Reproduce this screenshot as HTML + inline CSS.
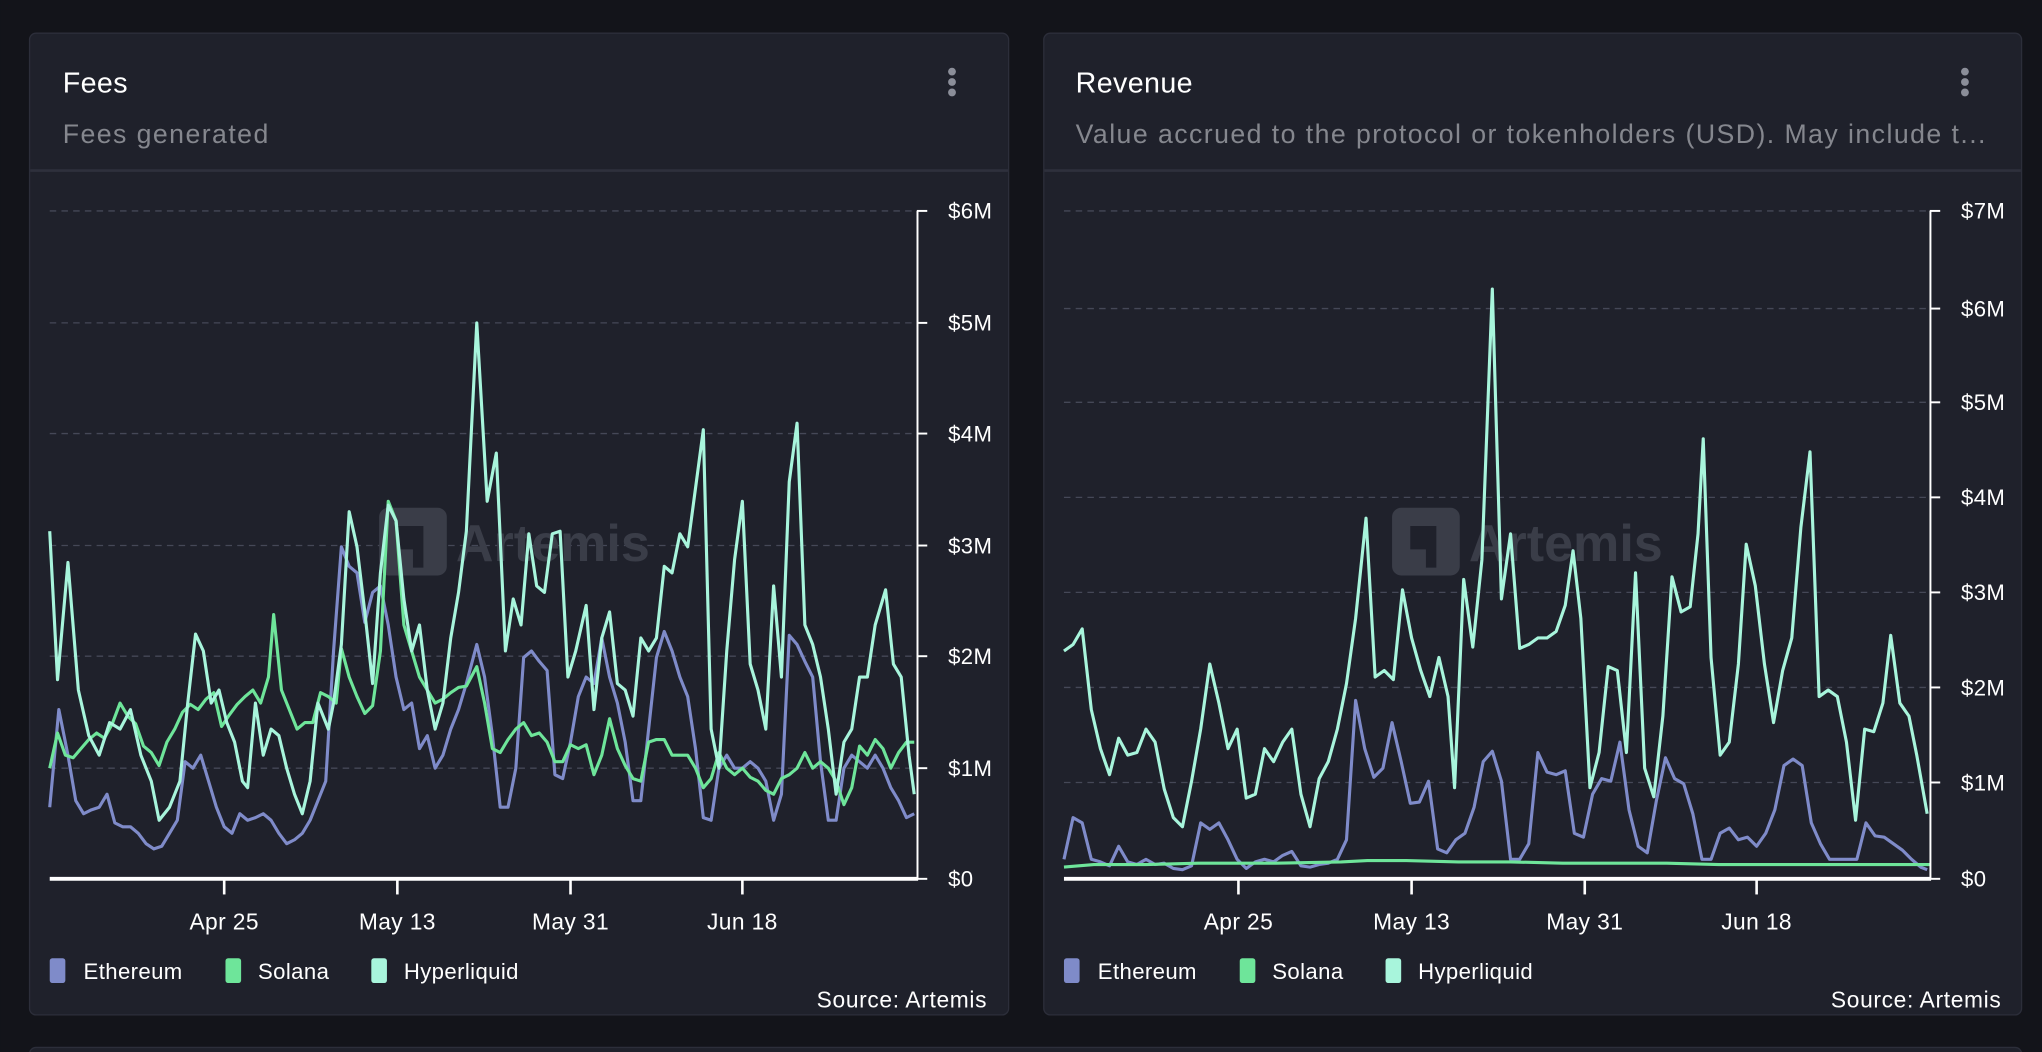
<!DOCTYPE html>
<html><head><meta charset="utf-8"><style>
html,body{margin:0;padding:0;background:#13141a;overflow:hidden}
svg{display:block}
text{font-family:"Liberation Sans",sans-serif}
</style></head><body>
<svg width="2042" height="1052" viewBox="0 0 1568 808" xmlns="http://www.w3.org/2000/svg">
<rect width="1568" height="808" fill="#13141a"/>
<rect x="22.5" y="25.5" width="752" height="754" rx="5" fill="#1f212b" stroke="#2c2e3a"/>
<rect x="801.5" y="25.5" width="751" height="754" rx="5" fill="#1f212b" stroke="#2c2e3a"/>
<rect x="22.5" y="804.5" width="1530" height="30" rx="5" fill="#1f212b" stroke="#2c2e3a"/>
<line x1="23" y1="131" x2="774" y2="131" stroke="#2e303c" stroke-width="2"/>
<line x1="802" y1="131" x2="1552" y2="131" stroke="#2e303c" stroke-width="2"/>
<text x="48" y="71" fill="#fff" font-size="22" letter-spacing="0.3">Fees</text>
<text x="48" y="110" fill="#85878e" font-size="20.5" letter-spacing="1.1">Fees generated</text>
<text x="826" y="71" fill="#fff" font-size="22" letter-spacing="0.3">Revenue</text>
<text x="826" y="110" fill="#85878e" font-size="20.5" letter-spacing="1.1">Value accrued to the protocol or tokenholders (USD). May include t...</text>
<g fill="#8b8e99"><circle cx="731" cy="55" r="3"/><circle cx="731" cy="63" r="3"/><circle cx="731" cy="71" r="3"/>
<circle cx="1509" cy="55" r="3"/><circle cx="1509" cy="63" r="3"/><circle cx="1509" cy="71" r="3"/></g>

<g stroke="#454857" stroke-dasharray="5,4" stroke-width="1">
<line x1="38" y1="162" x2="704" y2="162"/><line x1="38" y1="248" x2="704" y2="248"/><line x1="38" y1="333" x2="704" y2="333"/><line x1="38" y1="419" x2="704" y2="419"/><line x1="38" y1="504" x2="704" y2="504"/><line x1="38" y1="590" x2="704" y2="590"/>
<line x1="817" y1="162" x2="1482" y2="162"/><line x1="817" y1="237" x2="1482" y2="237"/><line x1="817" y1="309" x2="1482" y2="309"/><line x1="817" y1="382" x2="1482" y2="382"/><line x1="817" y1="455" x2="1482" y2="455"/><line x1="817" y1="528" x2="1482" y2="528"/><line x1="817" y1="601" x2="1482" y2="601"/>
</g>
<g fill="#3a3d48">
<rect x="291" y="390" width="52" height="52" rx="7"/>
<text x="350" y="431" font-size="40" font-weight="bold">Artemis</text>
<rect x="1069" y="390" width="52" height="52" rx="7"/>
<text x="1128" y="431" font-size="40" font-weight="bold">Artemis</text>
</g>
<g fill="#1f212b">
<path d="M305 404h20v32h-8v-14h-12z"/><path d="M1083 404h20v32h-8v-14h-12z"/>
</g>

<g fill="none" stroke-width="2.4" stroke-linejoin="round">
<polyline stroke="#7f8bc9" points="38,620 45,545 52,580 58,615 64,625 70,622 76,620 82,610 88,632 94,635 100,635 106,640 112,648 118,652 124,650 130,640 136,630 142,585 148,590 154,580 160,600 166,620 172,635 178,640 184,625 190,630 196,628 202,625 208,630 214,640 220,648 226,645 232,640 238,630 244,615 250,600 256,500 262,420 268,435 274,440 280,478 286,455 292,450 298,480 304,520 310,545 316,540 322,575 328,565 334,590 340,580 346,560 352,545 358,525 366,495 372,520 378,565 384,620 390,620 396,590 402,505 408,500 414,508 420,515 426,595 432,598 438,570 444,535 450,520 456,525 462,490 468,520 474,540 480,570 486,615 492,615 498,560 504,505 510,485 516,500 522,520 528,535 534,575 540,628 546,630 552,590 558,580 564,590 570,590 576,585 582,590 588,600 594,630 600,610 606,488 612,495 618,508 624,520 630,585 636,630 642,630 648,590 654,580 660,585 666,590 672,580 678,590 684,605 690,615 696,628 702,625"/>
<polyline stroke="#6ee59a" points="38,590 44,563 50,580 56,582 62,575 68,568 74,563 80,567 86,556 92,540 98,550 104,556 110,573 116,578 122,588 128,570 134,560 140,547 146,541 152,545 158,537 164,532 170,558 176,549 182,541 188,535 194,530 200,540 206,520 210,472 216,530 222,545 228,560 234,555 240,555 246,532 252,535 258,540 262,498 268,520 274,535 280,548 286,542 292,500 298,385 304,400 310,480 316,500 322,520 328,530 334,540 340,537 346,532 352,528 358,527 366,512 372,540 378,575 384,578 390,568 396,560 402,555 408,565 414,563 420,570 426,585 432,585 438,572 444,575 450,572 456,595 462,580 468,552 474,575 480,588 486,598 492,600 498,570 504,568 510,568 516,580 522,580 528,580 534,590 540,605 546,598 552,578 558,590 564,595 570,590 576,597 582,600 588,607 594,610 600,598 606,595 612,590 618,578 624,590 630,585 636,590 642,600 648,618 654,605 660,573 666,580 672,568 678,575 684,590 690,578 696,570 702,570"/>
<polyline stroke="#a8f5dc" points="38,408 44,522 52,432 60,530 68,565 76,580 84,555 92,560 100,545 108,580 116,600 122,630 130,620 138,600 144,540 150,487 156,500 162,540 168,530 174,555 180,570 186,600 190,605 196,540 202,580 208,560 214,565 220,590 226,610 232,625 238,600 244,540 252,560 256,540 262,495 268,393 274,420 280,470 286,525 292,440 298,388 304,400 310,460 316,500 322,480 328,530 334,560 340,540 346,490 352,455 358,408 366,248 374,385 381,348 388,500 394,460 400,480 406,410 412,450 418,455 424,410 430,408 436,520 442,500 450,465 456,545 462,490 468,470 474,525 480,530 486,550 492,490 498,500 504,490 510,435 516,440 522,410 528,420 534,375 540,330 546,560 552,590 558,500 564,430 570,385 576,510 582,530 588,560 594,450 600,520 606,370 612,325 618,480 624,495 630,520 636,560 642,610 648,570 654,560 660,520 666,520 672,480 680,453 686,510 692,520 698,580 702,610"/>

<polyline stroke="#7f8bc9" points="817,660 824,628 831,632 838,660 845,662 852,665 859,650 866,662 873,664 880,660 887,664 894,663 901,667 908,668 915,665 922,632 929,637 936,632 943,645 950,660 957,667 964,662 971,660 978,662 985,657 992,654 999,665 1006,666 1013,664 1020,663 1027,660 1034,645 1041,538 1048,575 1055,597 1062,590 1069,555 1076,585 1083,617 1090,616 1097,600 1104,652 1111,655 1118,645 1125,640 1132,620 1139,585 1146,577 1153,600 1160,660 1167,660 1174,648 1181,578 1188,593 1195,595 1202,592 1209,640 1216,643 1223,610 1230,598 1237,600 1244,570 1251,622 1258,650 1265,655 1272,615 1279,582 1286,598 1293,602 1300,625 1307,660 1314,660 1321,640 1328,636 1335,645 1342,643 1349,650 1356,640 1363,622 1370,588 1377,583 1384,588 1391,632 1398,648 1405,660 1412,660 1419,660 1426,660 1433,632 1440,642 1447,643 1454,648 1461,653 1468,660 1475,666 1480,668"/>
<polyline stroke="#6ee59a" points="817,666 840,664 880,664 920,663 980,663 1030,662 1050,661 1080,661 1120,662 1160,662 1200,663 1240,663 1280,663 1320,664 1360,664 1400,664 1440,664 1482,664"/>
<polyline stroke="#a8f5dc" points="817,500 824,495 831,483 838,545 845,575 852,595 859,567 866,580 873,578 880,560 887,570 894,606 901,628 908,635 915,600 922,560 929,510 936,540 943,575 950,560 957,613 964,610 971,575 978,585 985,570 992,560 999,610 1006,635 1013,598 1020,585 1027,560 1034,525 1041,475 1049,398 1056,520 1063,515 1070,522 1077,453 1084,490 1091,515 1098,535 1105,505 1112,535 1117,605 1124,445 1131,497 1138,430 1146,222 1153,460 1160,410 1167,498 1174,495 1181,490 1188,490 1195,485 1202,465 1208,423 1214,475 1221,605 1228,578 1235,512 1242,515 1249,578 1256,440 1263,590 1270,612 1277,550 1284,443 1291,470 1298,466 1304,410 1308,337 1314,505 1321,580 1328,570 1335,510 1341,418 1348,450 1355,510 1362,555 1369,515 1376,490 1383,405 1390,347 1397,535 1404,530 1411,535 1418,570 1425,630 1432,560 1439,562 1446,540 1452,488 1459,540 1466,550 1472,580 1480,625"/>
</g>

<g stroke="#fff">
<line x1="38" y1="675" x2="705" y2="675" stroke-width="3"/>
<line x1="704.5" y1="162" x2="704.5" y2="675" stroke-width="1.5"/>
<g stroke-width="1.5"><line x1="704" y1="162" x2="712" y2="162"/><line x1="704" y1="248" x2="712" y2="248"/><line x1="704" y1="333" x2="712" y2="333"/><line x1="704" y1="419" x2="712" y2="419"/><line x1="704" y1="504" x2="712" y2="504"/><line x1="704" y1="590" x2="712" y2="590"/><line x1="704" y1="675" x2="712" y2="675"/></g>
<g stroke-width="2"><line x1="172" y1="675" x2="172" y2="687"/><line x1="305" y1="675" x2="305" y2="687"/><line x1="438" y1="675" x2="438" y2="687"/><line x1="570" y1="675" x2="570" y2="687"/></g>
<line x1="817" y1="675" x2="1483" y2="675" stroke-width="3"/>
<line x1="1482.5" y1="162" x2="1482.5" y2="675" stroke-width="1.5"/>
<g stroke-width="1.5"><line x1="1482" y1="162" x2="1490" y2="162"/><line x1="1482" y1="237" x2="1490" y2="237"/><line x1="1482" y1="309" x2="1490" y2="309"/><line x1="1482" y1="382" x2="1490" y2="382"/><line x1="1482" y1="455" x2="1490" y2="455"/><line x1="1482" y1="528" x2="1490" y2="528"/><line x1="1482" y1="601" x2="1490" y2="601"/><line x1="1482" y1="675" x2="1490" y2="675"/></g>
<g stroke-width="2"><line x1="951" y1="675" x2="951" y2="687"/><line x1="1084" y1="675" x2="1084" y2="687"/><line x1="1217" y1="675" x2="1217" y2="687"/><line x1="1349" y1="675" x2="1349" y2="687"/></g>
</g>
<g fill="#fff" font-size="17" letter-spacing="0.3">
<text x="728" y="168">$6M</text><text x="728" y="254">$5M</text><text x="728" y="339">$4M</text><text x="728" y="425">$3M</text><text x="728" y="510">$2M</text><text x="728" y="596">$1M</text><text x="728" y="681">$0</text>
<text x="1506" y="168">$7M</text><text x="1506" y="243">$6M</text><text x="1506" y="315">$5M</text><text x="1506" y="388">$4M</text><text x="1506" y="461">$3M</text><text x="1506" y="534">$2M</text><text x="1506" y="607">$1M</text><text x="1506" y="681">$0</text>
<g text-anchor="middle" font-size="17.5"><text x="172" y="714">Apr 25</text><text x="305" y="714">May 13</text><text x="438" y="714">May 31</text><text x="570" y="714">Jun 18</text>
<text x="951" y="714">Apr 25</text><text x="1084" y="714">May 13</text><text x="1217" y="714">May 31</text><text x="1349" y="714">Jun 18</text></g>
<text x="64" y="752">Ethereum</text><text x="198" y="752">Solana</text><text x="310" y="752">Hyperliquid</text>
<text x="843" y="752">Ethereum</text><text x="977" y="752">Solana</text><text x="1089" y="752">Hyperliquid</text>
<text x="758" y="774" text-anchor="end" font-size="17.5" letter-spacing="0.5">Source: Artemis</text>
<text x="1537" y="774" text-anchor="end" font-size="17.5" letter-spacing="0.5">Source: Artemis</text>
</g>
<rect x="38" y="736" width="12" height="19" rx="2" fill="#7f8bc9"/><rect x="173" y="736" width="12" height="19" rx="2" fill="#6ee59a"/><rect x="285" y="736" width="12" height="19" rx="2" fill="#a8f5dc"/>
<rect x="817" y="736" width="12" height="19" rx="2" fill="#7f8bc9"/><rect x="952" y="736" width="12" height="19" rx="2" fill="#6ee59a"/><rect x="1064" y="736" width="12" height="19" rx="2" fill="#a8f5dc"/>
</svg>
</body></html>
